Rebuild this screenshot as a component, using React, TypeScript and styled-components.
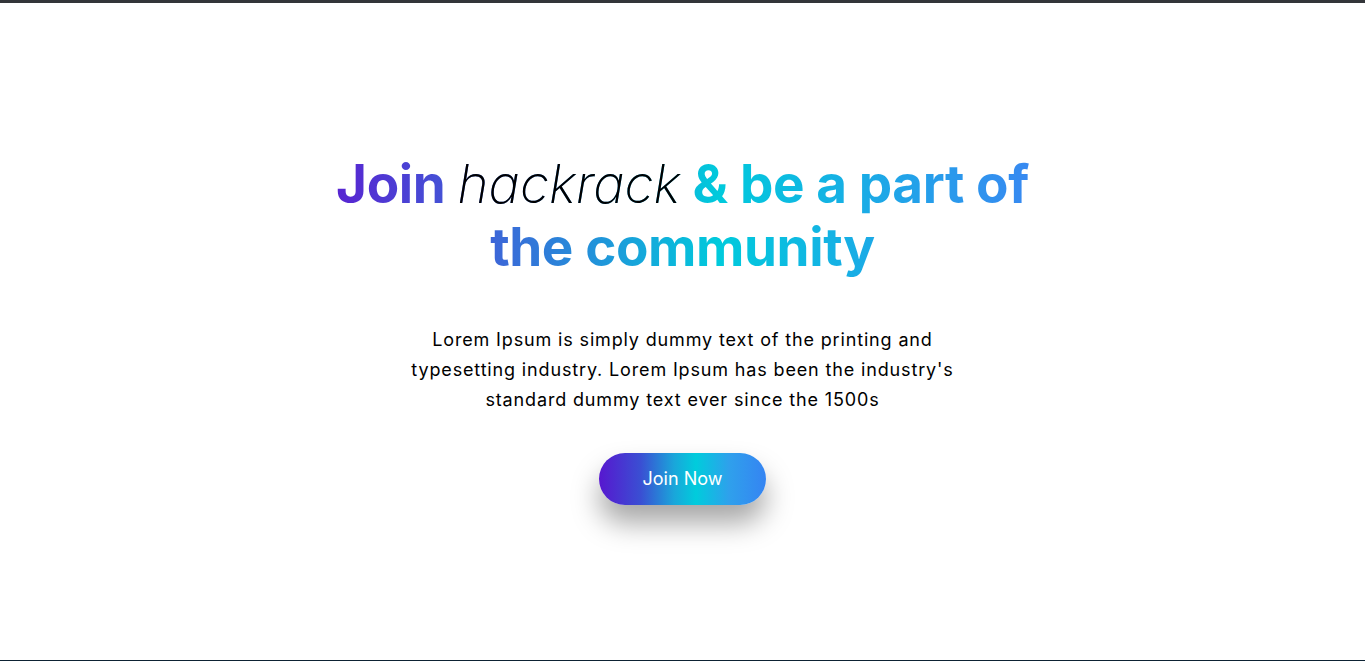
import React from "react";
import styled, { createGlobalStyle } from "styled-components";

const Global = createGlobalStyle`
  html, body { margin: 0; padding: 0; background: #ffffff; }
  body { font-family: Inter, "Noto Sans", Arial, sans-serif; }
`;

const Page = styled.main`
  box-sizing: border-box;
  min-height: 100vh;
  border-top: 3px solid #333539;
  border-bottom: 1px solid #0d2233;
  display: flex;
  flex-direction: column;
  align-items: center;
  justify-content: center;
  padding-bottom: 6px;
`;

const Heading = styled.h1`
  margin: 0;
  width: 720px;
  text-align: center;
  font-family: Inter, sans-serif;
  font-weight: 700;
  font-size: 53px;
  line-height: 63px;
  letter-spacing: -0.4px;
  background: linear-gradient(90deg, #5a1fd1 0%, #3a6ad8 25%, #00cadc 55%, #3a86f2 100%);
  -webkit-background-clip: text;
  background-clip: text;
  color: transparent;
`;

const Brand = styled.em`
  font-style: italic;
  font-weight: 200;
  color: #000;
  -webkit-text-fill-color: #000;
  letter-spacing: 0;
`;

const Lead = styled.p`
  margin: 46px 0 0;
  width: 580px;
  text-align: center;
  font-family: Inter, sans-serif;
  font-size: 18px;
  font-weight: 400;
  line-height: 30px;
  letter-spacing: 0.85px;
  color: #000;
`;

const JoinButton = styled.button`
  margin-top: 38px;
  width: 167px;
  height: 52px;
  border: none;
  border-radius: 26px;
  background: linear-gradient(90deg, #5717cf 0%, #3a4fd3 25%, #1aa6da 45%, #00ccdc 58%, #2fa0ec 78%, #3584f2 100%);
  color: #fff;
  font-family: Inter, sans-serif;
  font-size: 18px;
  box-shadow: 0 18px 28px rgba(0, 0, 0, 0.35);
  cursor: pointer;
`;

export default function App() {
  return (
    <>
      <Global />
      <Page>
        <Heading>
          Join <Brand>hackrack</Brand> &amp; be a part of the community
        </Heading>
        <Lead>
          Lorem Ipsum is simply dummy text of the printing and typesetting industry. Lorem Ipsum has been the industry's standard dummy text ever since the 1500s
        </Lead>
        <JoinButton>Join Now</JoinButton>
      </Page>
    </>
  );
}
